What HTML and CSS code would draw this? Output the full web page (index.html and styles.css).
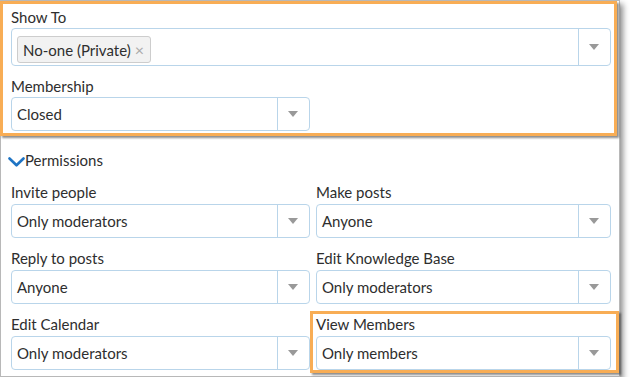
FILE: index.html
```html
<!DOCTYPE html>
<html>
<head>
    <title>Group Settings</title>
    <link rel="stylesheet" href="styles.css">
</head>
<body>
    <div class="panel">
        <div class="highlight highlight-top">
            <div class="field">
                <div class="field-label">Show To</div>
                <div class="select select-multi">
                    <div class="select-value">
                        <span class="tag">No-one (Private)<span class="tag-remove">&times;</span></span>
                    </div>
                    <div class="select-arrow"></div>
                </div>
            </div>
            <div class="field field-half">
                <div class="field-label">Membership</div>
                <div class="select">
                    <div class="select-value">Closed</div>
                    <div class="select-arrow"></div>
                </div>
            </div>
        </div>

        <div class="section-toggle">
            <svg class="chevron" width="17" height="10" viewBox="0 0 17 10">
                <polyline points="1.5,1.5 8.5,8.3 15.5,1.5" fill="none" stroke="#1f74c4" stroke-width="2.6" stroke-linecap="round" stroke-linejoin="round"/>
            </svg>
            Permissions
        </div>

        <div class="perm-grid">
            <div class="field">
                <div class="field-label">Invite people</div>
                <div class="select">
                    <div class="select-value">Only moderators</div>
                    <div class="select-arrow"></div>
                </div>
            </div>
            <div class="field">
                <div class="field-label">Make posts</div>
                <div class="select">
                    <div class="select-value">Anyone</div>
                    <div class="select-arrow"></div>
                </div>
            </div>
            <div class="field">
                <div class="field-label">Reply to posts</div>
                <div class="select">
                    <div class="select-value">Anyone</div>
                    <div class="select-arrow"></div>
                </div>
            </div>
            <div class="field">
                <div class="field-label">Edit Knowledge Base</div>
                <div class="select">
                    <div class="select-value">Only moderators</div>
                    <div class="select-arrow"></div>
                </div>
            </div>
            <div class="field">
                <div class="field-label">Edit Calendar</div>
                <div class="select">
                    <div class="select-value">Only moderators</div>
                    <div class="select-arrow"></div>
                </div>
            </div>
            <div class="field highlight highlight-cell">
                <div class="field-label">View Members</div>
                <div class="select">
                    <div class="select-value">Only members</div>
                    <div class="select-arrow"></div>
                </div>
            </div>
        </div>
    </div>
</body>
</html>
```

FILE: styles.css
```css
body {
    margin: 0;
    background-color: #fff;
    font-family: Lato, "Open Sans", sans-serif;
    color: #2e2e2e;
}

.panel {
    box-sizing: border-box;
    width: 620px;
    height: 377px;
    padding: 0 8px 0 10px;
    background-color: #fff;
    border: 1px solid #b8b8b8;
    box-shadow: 3px 4px 6px rgba(0, 0, 0, 0.45);
}

/* orange annotation frames */
.highlight {
    border: 3px solid #f8ad55;
    box-shadow: 2px 2px 2px rgba(0, 0, 0, 0.45);
    background-color: #fff;
}

.highlight-top {
    margin: 0 -6px 0 -11px;
    padding: 4px 3px 2px 8px;
}

.highlight-cell {
    margin: -4px -8px -3px -6px;
    padding: 1px 5px 0 3px;
}

.field-label {
    font-size: 15px;
    line-height: 18px;
    margin-bottom: 3px;
}

.highlight-top .field-label {
    margin-bottom: 2px;
}

.field-half {
    width: 299px;
    margin-top: 11px;
}

.select {
    box-sizing: border-box;
    display: flex;
    height: 34px;
    border: 1px solid #b9d5ea;
    border-radius: 4px;
    background-color: #fff;
}

.select-value {
    flex: 1;
    display: flex;
    align-items: center;
    padding-left: 5px;
    font-size: 15px;
}

.select-arrow {
    width: 31px;
    border-left: 1px solid #b9d5ea;
    position: relative;
}

.select-arrow::after {
    content: "";
    position: absolute;
    left: 10px;
    top: 50%;
    margin-top: -3px;
    border-left: 5px solid transparent;
    border-right: 5px solid transparent;
    border-top: 6px solid #999;
}

.select-multi {
    height: 38px;
}

.select-multi .select-value {
    align-items: flex-start;
    padding-top: 7px;
}

.tag {
    display: inline-flex;
    align-items: center;
    box-sizing: border-box;
    height: 27px;
    padding: 0 6px 0 5px;
    background-color: #f2f2f2;
    border: 1px solid #cdcdcd;
    border-radius: 3px;
    font-size: 15px;
}

.tag-remove {
    margin-left: 4px;
    color: #aaa;
    font-size: 16px;
}

.section-toggle {
    display: flex;
    align-items: center;
    margin: 15px 0 14px -3px;
    height: 18px;
    font-size: 15px;
    line-height: 18px;
}

.chevron {
    margin-top: 4px;
    margin-right: 0;
}

.perm-grid {
    display: grid;
    grid-template-columns: 299px 295px;
    column-gap: 6px;
    row-gap: 11px;
}
```
